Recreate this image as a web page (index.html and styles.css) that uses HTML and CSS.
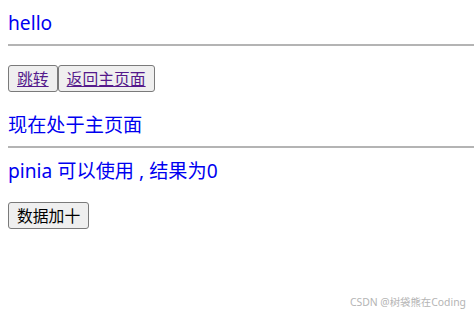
FILE: index.html
```html
<!DOCTYPE html>
<html lang="zh-CN">
<head>
<meta charset="utf-8">
<title>hello</title>
<link rel="stylesheet" href="styles.css">
</head>
<body>
<div class="page">
  <div class="title first">hello</div>
  <hr class="rule">
  <div class="nav">
    <button class="btn"><a class="link" href="#">跳转</a></button><button class="btn"><a class="link" href="#">返回主页面</a></button>
  </div>
  <div class="title home">现在处于主页面</div>
  <hr class="rule">
  <div class="title pinia">pinia 可以使用 , 结果为0</div>
  <div class="actions">
    <button class="btn">数据加十</button>
  </div>
</div>
<div class="watermark">CSDN @树袋熊在Coding</div>
</body>
</html>
```

FILE: styles.css
```css
html, body {
  margin: 0;
  padding: 0;
  background: #ffffff;
}

body {
  width: 474px;
  height: 312px;
  position: relative;
  overflow: hidden;
  font-family: "Noto Sans", "Noto Sans CJK SC", sans-serif;
}

.page {
  padding-left: 8px;
}

.title {
  color: #0000f0;
  font-size: 19.2px;
  line-height: 25px;
}

.first {
  padding-top: 10px;
}

.home {
  margin-top: 20px;
}

.pinia {
  margin-top: 10px;
}

.rule {
  margin: 9px 0 0 0;
  border: 0;
  border-top: 2px solid #b4b4b4;
  height: 0;
}

.nav {
  display: flex;
  margin-top: 19px;
}

.actions {
  display: flex;
  margin-top: 19px;
}

.btn {
  font-family: "Noto Sans CJK SC", sans-serif;
  font-size: 15.8px;
  line-height: 21px;
  padding: 2px 8px;
  margin: 0;
  border: 1px solid #7a7a7a;
  border-radius: 3px;
  background: #efefef;
  color: #000000;
}

.link {
  color: #551a8b;
  text-decoration: underline;
}

.watermark {
  position: absolute;
  right: 8px;
  top: 296px;
  font-size: 10.4px;
  line-height: 13px;
  color: #b4b4b4;
  font-family: "Noto Sans", "Noto Sans CJK SC", sans-serif;
}
```
